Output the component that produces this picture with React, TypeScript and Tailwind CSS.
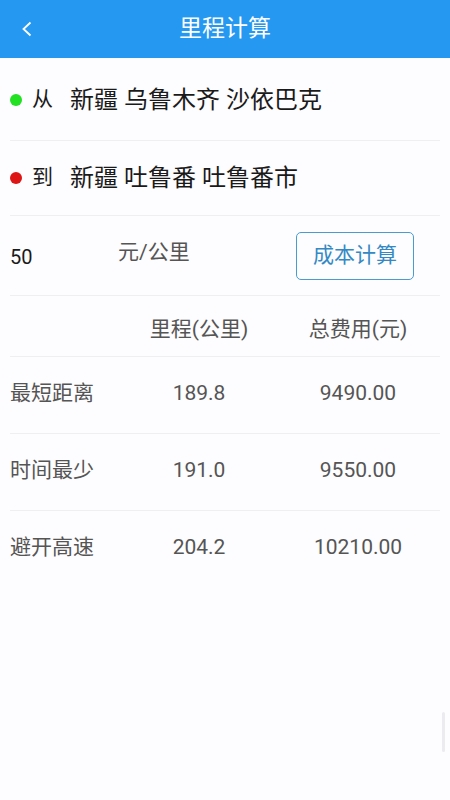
import React from 'react';

const rows = [
  { name: '最短距离', km: '189.8', cost: '9490.00' },
  { name: '时间最少', km: '191.0', cost: '9550.00' },
  { name: '避开高速', km: '204.2', cost: '10210.00' },
];

export default function App() {
  return (
    <div
      className="relative w-[450px] h-[800px] bg-[#fdfcfe] overflow-hidden"
      style={{ fontFamily: "Roboto, 'Noto Sans CJK SC', sans-serif" }}
    >
      {/* header */}
      <div className="h-[58px] bg-[#2598f2] flex items-center relative">
        <svg className="absolute left-[21px] top-[20px]" width="14" height="18" viewBox="0 0 14 18">
          <path d="M9.5 2.5 L2.5 9 L9.5 15.5" fill="none" stroke="#fff" strokeWidth="1.8" />
        </svg>
        <div className="w-full text-center text-white text-[23px]">里程计算</div>
      </div>

      <div className="px-[10px]">
        {/* from */}
        <div className="h-[83px] flex items-center border-b border-[#efeef0] pt-[2px]">
          <span className="w-[12px] h-[12px] rounded-full bg-[#22e022]" />
          <span className="ml-[10px] text-[21px] text-[#1a1a1a]">从</span>
          <span className="ml-[17px] text-[24px] text-[#1a1a1a]">新疆 乌鲁木齐 沙依巴克</span>
        </div>
        {/* to */}
        <div className="h-[75px] flex items-center border-b border-[#efeef0]">
          <span className="w-[12px] h-[12px] rounded-full bg-[#dd1515]" />
          <span className="ml-[10px] text-[21px] text-[#1a1a1a]">到</span>
          <span className="ml-[17px] text-[24px] text-[#1a1a1a]">新疆 吐鲁番 吐鲁番市</span>
        </div>
        {/* price */}
        <div className="h-[80px] flex items-center border-b border-[#efeef0]">
          <span className="w-[108px] text-[20px] text-[#1a1a1a] pt-[2px]">50</span>
          <span className="text-[21px] text-[#555] mb-[6px]">元/公里</span>
          <div className="ml-auto mr-[26px] w-[118px] h-[48px] border border-[#4a9bd0] rounded-[5px] flex items-center justify-center text-[21px] text-[#3489c4]">
            成本计算
          </div>
        </div>
        {/* table header */}
        <div className="h-[61px] flex items-center border-b border-[#efeef0] text-[21px] text-[#555] pt-[8px]">
          <span className="w-[118px] shrink-0" />
          <span className="w-[142px] shrink-0 text-center">里程(公里)</span>
          <span className="w-[176px] shrink-0 text-center">总费用(元)</span>
        </div>
        {rows.map((r, i) => (
          <div
            key={r.name}
            className={`h-[77px] flex items-center text-[21px] text-[#555] pb-[3px] ${i < rows.length - 1 ? 'border-b border-[#efeef0]' : ''}`}
          >
            <span className="w-[118px] shrink-0">{r.name}</span>
            <span className="w-[142px] shrink-0 text-center">{r.km}</span>
            <span className="w-[176px] shrink-0 text-center">{r.cost}</span>
          </div>
        ))}
      </div>

      {/* scroll indicator */}
      <div className="absolute left-[442px] top-[712px] w-[3px] h-[40px] bg-[#ececf0] rounded" />
    </div>
  );
}
